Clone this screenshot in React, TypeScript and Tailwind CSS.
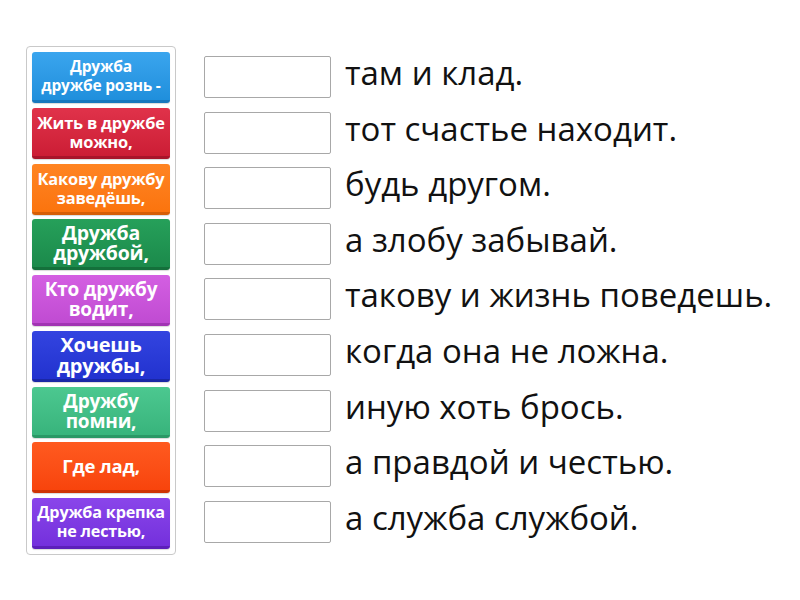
const tiles = [
  { lines: ['Дружба', 'дружбе рознь -'], size: 'text-[15.5px] leading-[19px]', cls: 'from-[#3aa5ee] to-[#1f8fdc] border-[#1877bd]' },
  { lines: ['Жить в дружбе', 'можно,'], size: 'text-[16.4px] leading-[19px]', cls: 'from-[#e0324a] to-[#cc1d35] border-[#a8142a]' },
  { lines: ['Какову дружбу', 'заведёшь,'], size: 'text-[16.4px] leading-[19px]', cls: 'from-[#ff8422] to-[#fb740d] border-[#d65e05]' },
  { lines: ['Дружба', 'дружбой,'], size: 'text-[19.5px] leading-[20px]', cls: 'from-[#26a05a] to-[#1b8a4b] border-[#14703b]' },
  { lines: ['Кто дружбу', 'водит,'], size: 'text-[19px] leading-[20px]', cls: 'from-[#d45fe2] to-[#c04bd2] border-[#a134b3]' },
  { lines: ['Хочешь', 'дружбы,'], size: 'text-[20px] leading-[21px]', cls: 'from-[#3344e0] to-[#2232cf] border-[#1a27a6]' },
  { lines: ['Дружбу', 'помни,'], size: 'text-[19px] leading-[20px]', cls: 'from-[#4cc890] to-[#38b47c] border-[#2a9866]' },
  { lines: ['Где лад,'], size: 'text-[18.5px] leading-[20px]', cls: 'from-[#ff5a1f] to-[#f8440c] border-[#cf3404]' },
  { lines: ['Дружба крепка', 'не лестью,'], size: 'text-[16.2px] leading-[19px]', cls: 'from-[#8a45ea] to-[#7430dc] border-[#5c1fba]' },
];

const endings = [
  'там и клад.',
  'тот счастье находит.',
  'будь другом.',
  'а злобу забывай.',
  'такову и жизнь поведешь.',
  'когда она не ложна.',
  'иную хоть брось.',
  'а правдой и честью.',
  'а служба службой.',
];

export default function App() {
  return (
    <div className="w-[800px] h-[600px] bg-white font-['Open_Sans',sans-serif] relative">
      <div className="flex items-start pt-[46px] pl-[26px]">
        {/* Tile tray */}
        <div className="w-[150px] rounded-[4px] border border-[#c9c9c9] p-[5px] flex flex-col gap-[4.75px]">
          {tiles.map((t) => (
            <div
              key={t.lines.join(' ')}
              className={`h-[51px] rounded-[3px] bg-gradient-to-b border-b-[3px] ${t.cls} ${t.size} flex flex-col items-center justify-center px-[2px] text-center text-white font-bold tracking-[-0.2px] shadow-[0_1px_1px_rgba(0,0,0,0.15)]`}
            >
              {t.lines.map((l) => (
                <span key={l} className="whitespace-nowrap">{l}</span>
              ))}
            </div>
          ))}
        </div>

        {/* Answer rows */}
        <div className="ml-[28px] mt-[10px] flex flex-col gap-[13.6px]">
          {endings.map((e) => (
            <div key={e} className="flex items-center h-[42px]">
              <div className="w-[127px] h-[42px] rounded-[2px] border border-[#a8a8a8] bg-white shrink-0" />
              <span className="ml-[14px] pb-[8px] text-[33px] leading-[44px] text-[#111] whitespace-nowrap">{e}</span>
            </div>
          ))}
        </div>
      </div>
    </div>
  );
}
